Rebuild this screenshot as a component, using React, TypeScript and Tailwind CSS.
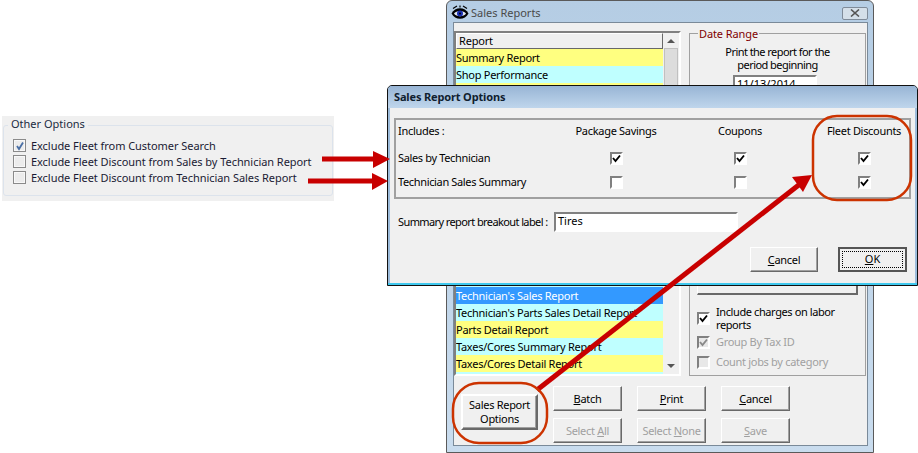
import React from "react";

const font = "[font-family:'Noto_Sans',Arial,sans-serif]";

function Check({ on = false, disabled = false, flat = false }: { on?: boolean; disabled?: boolean; flat?: boolean }) {
  if (flat) {
    return (
      <span className="flex h-[13px] w-[13px] shrink-0 items-center justify-center border border-[#8a8a8a] bg-[#ececec] shadow-[inset_0_0_0_1px_#f8f8f8]">
        {on && (
          <svg viewBox="0 0 10 10" className="h-[10px] w-[10px]">
            <path d="M2 5 L4 8 L8 1.5" fill="none" stroke="#4a6fa5" strokeWidth="1.8" />
          </svg>
        )}
      </span>
    );
  }
  return (
    <span
      className={`flex h-[13px] w-[13px] shrink-0 items-center justify-center border-2 border-t-[#808080] border-l-[#808080] border-r-white border-b-white ${disabled ? "bg-[#e8e8e8]" : "bg-white"}`}
    >
      {on && (
        <svg viewBox="0 0 9 9" className="h-[9px] w-[9px]">
          <path d="M1 4 L3.5 7 L8 1.5" fill="none" stroke={disabled ? "#8a8a8a" : "#000"} strokeWidth="1.9" />
        </svg>
      )}
    </span>
  );
}

function Btn({ children, w = "w-[69px]", h = "h-[25px]", disabled = false, className = "" }: { children: React.ReactNode; w?: string; h?: string; disabled?: boolean; className?: string }) {
  return (
    <div
      className={`flex ${w} ${h} shrink-0 items-center justify-center border border-t-white border-l-white border-r-[#696969] border-b-[#696969] bg-[#f0f0f0] text-center text-[11px] leading-[14px] tracking-[-0.3px] shadow-[inset_-1px_-1px_0_#a0a0a0] ${disabled ? "text-[#a0a0a0]" : "text-black"} ${className}`}
    >
      {children}
    </div>
  );
}

const yellow = "bg-[#ffff80]";
const cyan = "bg-[#bfffff]";

function Row({ bg, children, selected = false }: { bg: string; children?: React.ReactNode; selected?: boolean }) {
  return (
    <div className={`h-[17px] shrink-0 text-[11px] leading-[17px] tracking-[-0.27px] whitespace-nowrap ${bg} ${selected ? "text-white" : "text-black"}`}>{children}</div>
  );
}

function BackWindow() {
  return (
    <div className="absolute left-[446px] top-0 flex h-[453px] w-[428px] flex-col rounded-t-[6px] border border-[#5a5a5a] bg-gradient-to-b from-[#b5cde4] to-[#c9dcee] pb-[6px] pl-[6px] pr-[5px]">
      <div className="flex h-[21px] shrink-0 items-center">
        <svg viewBox="0 0 18 16" className="ml-[-2px] mr-[2px] mt-[3px] h-[17px] w-[18px]">
          <path d="M0.5 8 C4 1 14 1 17.5 8 C14 15 4 15 0.5 8Z" fill="#000" />
          <path d="M2 3 L6 0.5 M9 0 V2 M16 3 L12 0.5" stroke="#000" strokeWidth="1.2" />
          <path d="M3 8 C5 4.5 13 4.5 15 8 C13 11.5 5 11.5 3 8Z" fill="#dfe6ee" />
          <circle cx="9" cy="8" r="3" fill="#1a2fb0" />
          <circle cx="9" cy="8" r="1" fill="#000" />
        </svg>
        <span className="mt-[3px] text-[11px] text-[#4a4a4a]">Sales Reports</span>
        <div className="ml-auto mt-[3px] flex h-[13px] w-[26px] items-center justify-center rounded-[2px] border border-[#7f8b99] bg-[#d4dfe9]">
          <svg viewBox="0 0 10 8" className="h-[8px] w-[10px]">
            <path d="M1 0.5 L9 7.5 M9 0.5 L1 7.5" stroke="#555" strokeWidth="1.6" />
          </svg>
        </div>
      </div>
      <div className="flex min-h-0 flex-1 flex-col border border-[#7a8a99] bg-[#f0f0f0]">
        <div className="flex h-[353px] shrink-0 pt-[8px]">
          {/* list */}
          <div className="flex h-[345px] w-[227px] shrink-0 overflow-hidden border-2 border-t-[#808080] border-l-[#808080] border-r-white border-b-white bg-white">
            <div className="flex w-[207px] shrink-0 flex-col overflow-hidden">
              <div className="h-[16px] shrink-0 border border-t-white border-l-white border-r-[#696969] border-b-[#696969] bg-[#f0f0f0] pl-[2px] text-[11px] leading-[14px] tracking-[-0.2px] text-black">Report</div>
              <Row bg={yellow}>Summary Report</Row>
              <Row bg={cyan}>Shop Performance</Row>
              <Row bg={yellow} />
              <Row bg={cyan} />
              <Row bg={yellow} />
              <Row bg={cyan} />
              <Row bg={yellow} />
              <Row bg={cyan} />
              <Row bg={yellow} />
              <Row bg={cyan} />
              <Row bg={yellow} />
              <Row bg={cyan} />
              <Row bg={yellow} />
              <Row bg={cyan} />
              <Row bg="bg-[#3399ff]" selected>Technician's Sales Report</Row>
              <Row bg={cyan}>Technician's Parts Sales Detail Report</Row>
              <Row bg={yellow}>Parts Detail Report</Row>
              <Row bg={cyan}>Taxes/Cores Summary Report</Row>
              <Row bg={yellow}>Taxes/Cores Detail Report</Row>
              <Row bg={cyan} />
            </div>
            <div className="flex flex-1 flex-col items-center bg-[#f0f0f0]">
              <svg viewBox="0 0 8 4" className="mt-[6px] h-[4px] w-[8px]"><path d="M0 4 L4 0 L8 4Z" fill="#555" /></svg>
              <div className="mt-[5px] h-[50px] w-[14px] border border-[#c0c0c0] bg-[#dcdcdc]" />
              <svg viewBox="0 0 8 4" className="mt-auto mb-[6px] h-[4px] w-[8px]"><path d="M0 0 L4 4 L8 0Z" fill="#555" /></svg>
            </div>
          </div>
          {/* options */}
          <div className="relative ml-[8px] mt-[2px] h-[343px] w-[177px] shrink-0 border border-[#a0a0a0] px-[7px]">
            <span className="absolute left-[8px] top-[-8px] bg-[#f0f0f0] px-[1px] text-[11px] leading-[15px] tracking-[-0.1px] text-[#800000]">Date Range</span>
            <div className="mt-[11px] text-center text-[11px] leading-[13px] tracking-[-0.55px] text-black">
              Print the report for the
              <br />
              period beginning
            </div>
            <div className="ml-[36px] mt-[4px] flex h-[20px] w-[84px] border-2 border-t-[#808080] border-l-[#808080] border-r-white border-b-white bg-white pl-[2px] text-[11px] leading-[14px]">
              11/13/2014
            </div>
            <div className="h-[186px]" />
            <div className="h-[14px] border-b-2 border-l border-r-2 border-l-white border-r-[#696969] border-b-[#696969] bg-[#f0f0f0]" />
            <div className="mt-[10px] flex items-center gap-[6px]">
              <Check on />
              <span className="text-[11px] leading-[13px] tracking-[-0.4px] text-black">Include charges on labor<br />reports</span>
            </div>
            <div className="mt-[4px] flex items-center gap-[6px]">
              <Check on disabled />
              <span className="text-[11px] leading-[14px] tracking-[-0.3px] text-[#a0a0a0]">Group By Tax ID</span>
            </div>
            <div className="mt-[6px] flex items-center gap-[6px]">
              <Check disabled />
              <span className="text-[11px] leading-[14px] tracking-[-0.3px] text-[#a0a0a0]">Count jobs by category</span>
            </div>
          </div>
        </div>
        {/* bottom buttons */}
        <div className="ml-[99px] mt-[10px] flex flex-col gap-[7px]">
          <div className="flex gap-[15px]">
            <Btn><span><u>B</u>atch</span></Btn>
            <Btn><span><u>P</u>rint</span></Btn>
            <Btn><span><u>C</u>ancel</span></Btn>
          </div>
          <div className="flex gap-[15px]">
            <Btn disabled><span>Select <u>A</u>ll</span></Btn>
            <Btn disabled><span>Select <u>N</u>one</span></Btn>
            <Btn disabled><span><u>S</u>ave</span></Btn>
          </div>
        </div>
      </div>
    </div>
  );
}

function OptionsDialog() {
  const head = "text-center text-[11px] text-black leading-[14px] tracking-[-0.3px] whitespace-nowrap";
  const cell = "justify-self-center";
  return (
    <div className="absolute left-[387px] top-[85px] flex h-[201px] w-[531px] flex-col rounded-t-[5px] border border-[#111] bg-[#9dbcdb] shadow-[inset_0_-2px_0_#3fc8ee]">
      <div className="flex h-[22px] shrink-0 items-center rounded-t-[4px] bg-gradient-to-b from-[#98b5d5] to-[#bfd6ec] pl-[6px] text-[11px] font-bold tracking-[-0.15px] text-[#10202f]">
        Sales Report Options
      </div>
      <div className="mx-[2px] flex h-[175px] flex-col bg-[#f0f0f0]">
        <div className="ml-[4px] mt-[10px] grid h-[81px] w-[517px] grid-cols-[140px_92px_92px_92px] grid-rows-[26px_24px_24px] items-center gap-x-[32px] border-2 border-[#a0a0a0] pl-[2px] text-[11px] leading-[14px] text-black">
          <span className="mb-[4px] tracking-[-0.3px]">Includes :</span>
          <span className={`${head} mb-[4px]`}>Package Savings</span>
          <span className={`${head} mb-[4px]`}>Coupons</span>
          <span className={`${head} mb-[4px]`}>Fleet Discounts</span>
          <span className="whitespace-nowrap tracking-[-0.35px]">Sales by Technician</span>
          <span className={cell}><Check on /></span>
          <span className={cell}><Check on /></span>
          <span className={cell}><Check on /></span>
          <span className="whitespace-nowrap tracking-[-0.35px]">Technician Sales Summary</span>
          <span className={cell}><Check /></span>
          <span className={cell}><Check /></span>
          <span className={cell}><Check on /></span>
        </div>
        <div className="ml-[8px] mt-[13px] flex items-center">
          <span className="w-[156px] whitespace-nowrap text-[11px] tracking-[-0.6px] text-black">Summary report breakout label :</span>
          <div className="h-[20px] w-[184px] border-2 border-t-[#808080] border-l-[#808080] border-r-white border-b-white bg-white pl-[2px] text-[11px] leading-[14px] text-black">Tires</div>
        </div>
        <div className="mt-[15px] flex justify-end gap-[20px] pr-[8px]">
          <Btn w="w-[68px]"><span><u>C</u>ancel</span></Btn>
          <div className="flex h-[25px] w-[69px] items-center justify-center border-2 border-[#555] bg-[#f0f0f0] text-[11px]">
            <span className="flex h-[17px] w-[61px] items-center justify-center border border-dotted border-black"><span><u>O</u>K</span></span>
          </div>
        </div>
      </div>
    </div>
  );
}

function OtherOptions() {
  const rows = [
    { on: true, t: "Exclude Fleet from Customer Search" },
    { on: false, t: "Exclude Fleet Discount from Sales by Technician Report" },
    { on: false, t: "Exclude Fleet Discount from Technician Sales Report" },
  ];
  return (
    <div className="absolute left-[2px] top-[116px] h-[85px] w-[332px] bg-[#f0f0f0] px-[1px] pt-[9px]">
      <div className="relative h-[71px] rounded-[3px] border border-[#dce3ec] pl-[9px] pt-[13px]">
        <span className="absolute left-[4px] top-[-9px] bg-[#f0f0f0] px-[3px] text-[11px] leading-[14px] text-[#1a2b40]">Other Options</span>
        <div className="flex flex-col gap-[3px]">
          {rows.map((r) => (
            <div key={r.t} className="flex h-[13px] items-center gap-[5px]">
              <Check on={r.on} flat />
              <span className="whitespace-nowrap text-[11px] leading-[14px] tracking-[-0.05px] text-[#1a1a33]">{r.t}</span>
            </div>
          ))}
        </div>
      </div>
    </div>
  );
}

export default function App() {
  return (
    <div className={`relative h-[453px] w-[918px] overflow-hidden bg-white ${font}`}>
      <OtherOptions />
      <BackWindow />
      <div className="absolute left-[461px] top-[394px]">
        <Btn w="w-[77px]" h="h-[36px]" className="border-2 border-[#606060]">
          <span>Sales Report<br />Options</span>
        </Btn>
      </div>
      <OptionsDialog />
      <svg viewBox="0 0 918 453" className="pointer-events-none absolute left-0 top-0 h-[453px] w-[918px]">
        <path d="M322 159 H375" stroke="#c80000" strokeWidth="5" />
        <path d="M373 151 L390 159 L373 168Z" fill="#c80000" />
        <path d="M308 181 H375" stroke="#c80000" strokeWidth="5" />
        <path d="M372 173 L388 181 L372 190Z" fill="#c80000" />
        <path d="M537 390 L800 184" stroke="#c80000" strokeWidth="5" />
        <path d="M792 177 L812 175 L803 192Z" fill="#c80000" />
        <rect x="813" y="116" width="98" height="84" rx="24" fill="none" stroke="#cc3300" strokeWidth="2.5" />
        <rect x="453" y="383" width="94" height="60" rx="26" fill="none" stroke="#cc3300" strokeWidth="2.5" />
      </svg>
    </div>
  );
}
